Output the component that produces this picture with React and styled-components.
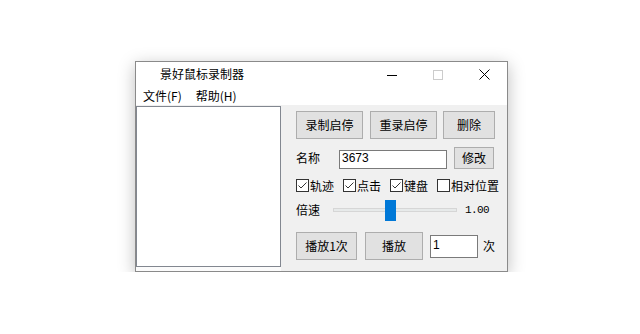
import React from 'react';
import styled, { createGlobalStyle } from 'styled-components';

const GlobalStyle = createGlobalStyle`
  body {
    margin: 0;
    background: #fff;
  }
`;

const Page = styled.div`
  padding: 61px 0 0 135px;
  font-family: "Noto Sans CJK SC", "Liberation Sans", sans-serif;
  font-size: 12px;
  line-height: 16px;
  color: #000;
`;

const Window = styled.div`
  width: 371px;
  border: 1px solid #8a8a8a;
  background: #fff;
  box-shadow: 0 4px 16px rgba(0, 0, 0, 0.26);
  display: flex;
  flex-direction: column;
`;

const TitleBar = styled.div`
  height: 23px;
  display: flex;
  align-items: center;
`;

const Title = styled.div`
  padding-left: 24px;
  flex: 1;
`;

const CaptionButton = styled.div`
  width: 46px;
  height: 23px;
  display: flex;
  align-items: center;
  justify-content: center;
  padding-top: 2px;
  box-sizing: border-box;
`;

const MenuBar = styled.div`
  height: 20px;
  display: flex;
  align-items: center;
  padding: 1px 0 0 7px;
  box-sizing: border-box;
  gap: 14px;
`;

const Client = styled.div`
  height: 166px;
  display: flex;
  background: #f0f0f0;
`;

const LeftCol = styled.div`
  width: 145px;
  display: flex;
  flex-direction: column;
`;

const ListBox = styled.div`
  margin-top: 1px;
  height: 161px;
  box-sizing: border-box;
  border: 1px solid #828790;
  background: #fff;
`;

const ListFoot = styled.div`
  flex: 1;
  background: #fbfbfb;
`;

const RightCol = styled.div`
  flex: 1;
  display: flex;
  flex-direction: column;
  padding: 6px 0 0 15px;
`;

const Row = styled.div`
  display: flex;
  align-items: center;
  margin-top: ${(p) => p.$top || 0}px;
  gap: ${(p) => p.$gap || 0}px;
`;

const Button = styled.div`
  width: ${(p) => p.$w}px;
  height: ${(p) => p.$h || 28}px;
  box-sizing: border-box;
  border: 1px solid #adadad;
  background: #e1e1e1;
  display: flex;
  align-items: center;
  justify-content: center;
  margin-left: ${(p) => p.$ml || 0}px;
`;

const Label = styled.div`
  width: ${(p) => p.$w}px;
  flex-shrink: 0;
  margin-left: ${(p) => p.$ml || 0}px;
`;

const TextBox = styled.div`
  width: ${(p) => p.$w}px;
  height: ${(p) => p.$h}px;
  box-sizing: border-box;
  border: 1px solid #7a7a7a;
  background: #fff;
  padding-left: 2px;
  font-family: "Liberation Sans", Arial, sans-serif;
  font-size: 12px;
  line-height: ${(p) => p.$h - 4}px;
  margin-left: ${(p) => p.$ml || 0}px;
  margin-top: ${(p) => p.$mt || 0}px;
`;

const Check = styled.label`
  display: flex;
  align-items: center;
  gap: 1px;
  height: 13px;
`;

const Box = styled.span`
  width: 13px;
  height: 13px;
  box-sizing: border-box;
  border: 1px solid #333;
  background: #fff;
  display: flex;
  align-items: center;
  justify-content: center;
`;

const SliderRow = styled(Row)`
  height: 21px;
`;

const Track = styled.div`
  position: relative;
  width: 124px;
  height: 4px;
  box-sizing: border-box;
  border: 1px solid #d6d6d6;
  background: #e7eaea;
`;

const Thumb = styled.div`
  position: absolute;
  left: 51px;
  top: -9px;
  width: 11px;
  height: 21px;
  background: #0078d7;
`;

const Value = styled.div`
  margin-left: 8px;
  font-family: "Liberation Mono", "DejaVu Sans Mono", monospace;
  font-size: 11px;
  letter-spacing: -0.6px;
`;

const CheckItem = ({ checked, children }) => (
  <Check>
    <Box>
      {checked && (
        <svg width="11" height="11" viewBox="0 0 11 11">
          <path d="M1.5 5.5 L4 8 L9.5 2.5" fill="none" stroke="#333" strokeWidth="1" />
        </svg>
      )}
    </Box>
    {children}
  </Check>
);

export default function App() {
  return (
    <Page>
      <GlobalStyle />
      <Window>
        <TitleBar>
          <Title>景好鼠标录制器</Title>
          <CaptionButton>
            <svg width="10" height="10" viewBox="0 0 10 10">
              <path d="M0 5.5 H10" stroke="#000" strokeWidth="1" />
            </svg>
          </CaptionButton>
          <CaptionButton>
            <svg width="10" height="10" viewBox="0 0 10 10">
              <rect x="0.5" y="0.5" width="9" height="9" fill="none" stroke="#cccccc" strokeWidth="1" />
            </svg>
          </CaptionButton>
          <CaptionButton>
            <svg width="11" height="11" viewBox="0 0 11 11">
              <path d="M0.5 0.5 L10.5 10.5 M10.5 0.5 L0.5 10.5" stroke="#000" strokeWidth="1" />
            </svg>
          </CaptionButton>
        </TitleBar>
        <MenuBar>
          <span>文件(F)</span>
          <span>帮助(H)</span>
        </MenuBar>
        <Client>
          <LeftCol>
            <ListBox />
            <ListFoot />
          </LeftCol>
          <RightCol>
            <Row>
              <Button $w={67}>录制启停</Button>
              <Button $w={67} $ml={7}>重录启停</Button>
              <Button $w={52} $ml={6}>删除</Button>
            </Row>
            <Row $top={8}>
              <Label $w={43}>名称</Label>
              <TextBox $w={108} $h={19} $mt={3}>3673</TextBox>
              <Button $w={40} $h={22} $ml={7}>修改</Button>
            </Row>
            <Row $top={10} $gap={9}>
              <CheckItem checked>轨迹</CheckItem>
              <CheckItem checked>点击</CheckItem>
              <CheckItem checked>键盘</CheckItem>
              <CheckItem>相对位置</CheckItem>
            </Row>
            <SliderRow $top={7}>
              <Label $w={37}>倍速</Label>
              <Track>
                <Thumb />
              </Track>
              <Value>1.00</Value>
            </SliderRow>
            <Row $top={12}>
              <Button $w={61}>播放1次</Button>
              <Button $w={58} $ml={8}>播放</Button>
              <TextBox $w={48} $h={23} $ml={7}>1</TextBox>
              <Label $w={20} $ml={5}>次</Label>
            </Row>
          </RightCol>
        </Client>
      </Window>
    </Page>
  );
}
